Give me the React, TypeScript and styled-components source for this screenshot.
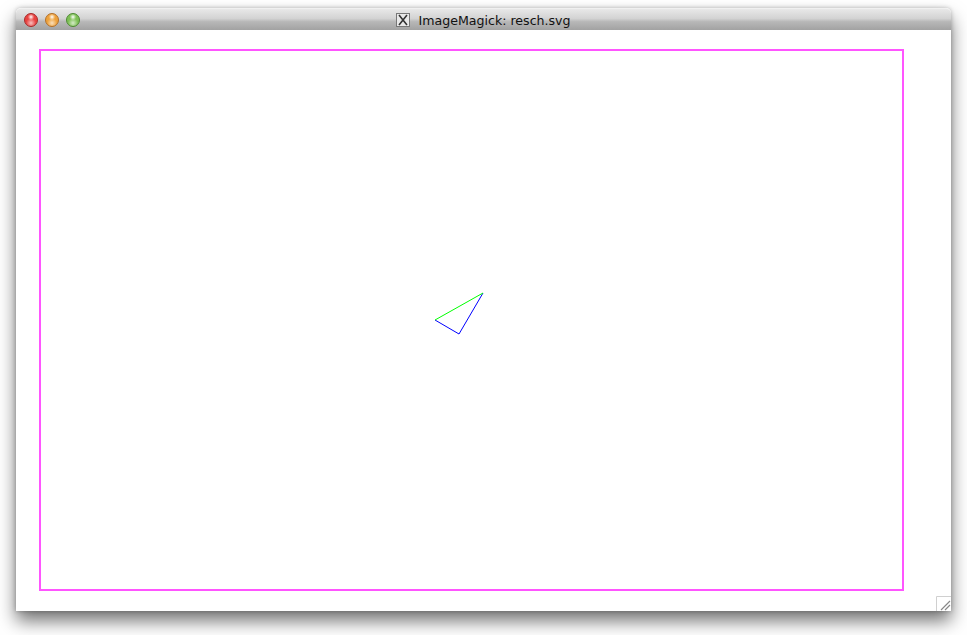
import React from "react";
import styled, { createGlobalStyle } from "styled-components";

const Global = createGlobalStyle`
  html, body { margin: 0; padding: 0; background: #ffffff; }
  body { width: 967px; height: 635px; overflow: hidden; }
`;

const Page = styled.div`
  padding: 8px 0 0 16px;
`;

const Window = styled.div`
  width: 935px;
  height: 603px;
  display: flex;
  flex-direction: column;
  border-radius: 5px 5px 0 0;
  box-shadow: 0 10px 18px rgba(0, 0, 0, 0.55), 0 0 4px rgba(0, 0, 0, 0.25);
  background: #ffffff;
`;

const TitleBar = styled.div`
  height: 22px;
  flex: none;
  display: grid;
  grid-template-columns: 1fr auto 1fr;
  align-items: center;
  border-radius: 5px 5px 0 0;
  background: linear-gradient(#e8e8e8 0%, #d3d3d3 45%, #b8b8b8 60%, #a2a2a2 100%);
  border-top: 1px solid #f0f0f0;
  box-sizing: border-box;
`;

const Lights = styled.div`
  display: flex;
  gap: 7px;
  padding-left: 8px;
`;

const Light = styled.span<{ $c: string; $d: string }>`
  width: 14px;
  height: 14px;
  border-radius: 50%;
  box-sizing: border-box;
  border: 1px solid ${(p) => p.$d};
  background: radial-gradient(circle at 50% 75%, #ffffffaa 0%, transparent 45%),
    radial-gradient(circle at 50% 25%, #ffffff 0%, transparent 30%), ${(p) => p.$c};
`;

const Title = styled.div`
  display: flex;
  align-items: center;
  gap: 8px;
  font-family: "DejaVu Sans", "Liberation Sans", sans-serif;
  font-size: 12.6px;
  color: #111;
  padding-top: 1px;
`;

const XIcon = styled.span`
  width: 12px;
  height: 12px;
  border: 1px solid #777;
  background: #e8e8e8;
  display: flex;
`;

const Content = styled.div`
  flex: 1;
  position: relative;
  padding: 19px 0 0 23px;
`;

const Grip = styled.svg`
  position: absolute;
  right: 0;
  bottom: 0;
`;

export default function App() {
  return (
    <>
      <Global />
      <Page>
        <Window>
          <TitleBar>
            <Lights>
              <Light $c="#e8423f" $d="#a62b2b" />
              <Light $c="#eda13b" $d="#b2702a" />
              <Light $c="#7ec055" $d="#4f8a35" />
            </Lights>
            <Title>
              <XIcon>
                <svg width="12" height="12" viewBox="0 0 12 12">
                  <path d="M2 1 L10 11 M10 1 L2 11" stroke="#333" strokeWidth="1.6" />
                </svg>
              </XIcon>
              ImageMagick: resch.svg
            </Title>
            <span />
          </TitleBar>
          <Content>
            <svg width="866" height="544" viewBox="0 0 866 544">
              <rect x="1" y="1" width="863" height="540" fill="none" stroke="#ff55ff" strokeWidth="2" />
              <polyline points="396,271 420,285 444,244" fill="none" stroke="#0000ff" strokeWidth="1" />
              <line x1="396" y1="271" x2="444" y2="244" stroke="#00ff00" strokeWidth="1" />
            </svg>
            <Grip width="15" height="15" viewBox="0 0 15 15">
              <path d="M0.5 15 V0.5 H15" fill="none" stroke="#d0d0d0" />
              <path d="M5 14 L14 5 M9 14 L14 9" stroke="#888" strokeWidth="1.2" />
            </Grip>
          </Content>
        </Window>
      </Page>
    </>
  );
}
